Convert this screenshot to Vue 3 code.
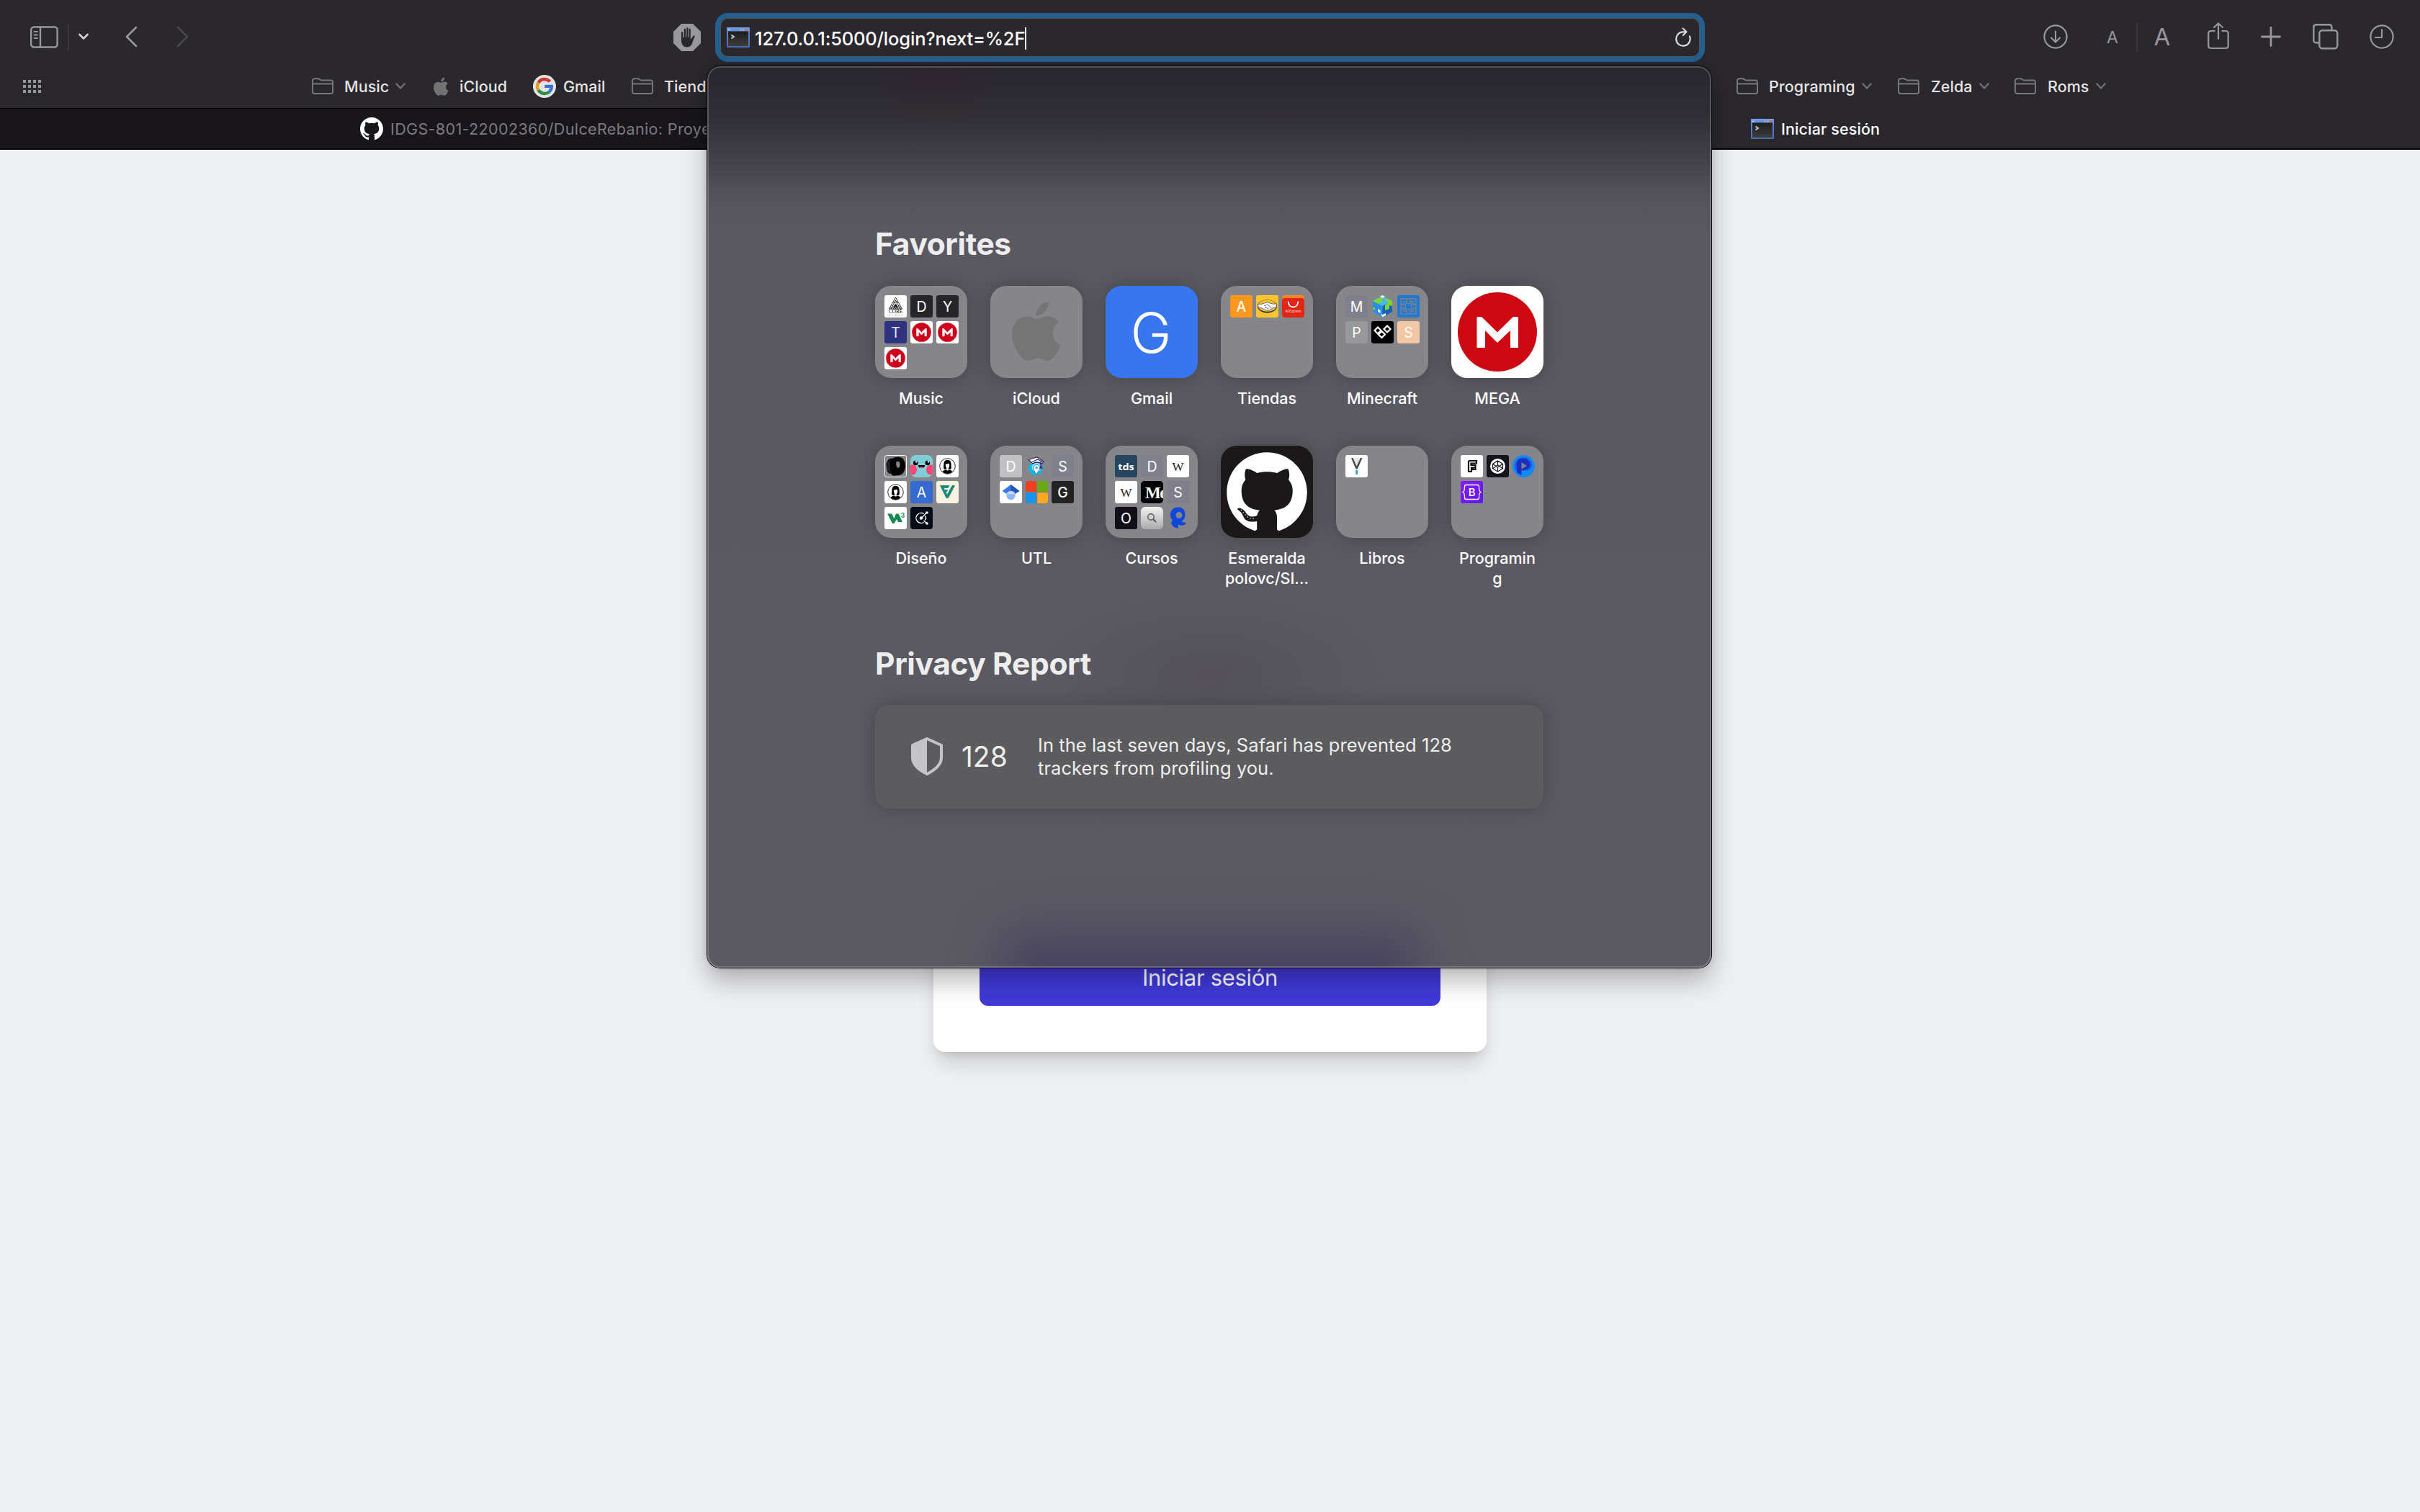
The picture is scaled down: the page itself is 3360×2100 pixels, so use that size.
<script setup>
const apple =
  'M12.152 6.896c-.948 0-2.415-1.078-3.96-1.04-2.04.027-3.91 1.183-4.961 3.014-2.117 3.675-.546 9.103 1.519 12.09 1.013 1.454 2.208 3.09 3.792 3.039 1.52-.065 2.09-.987 3.935-.987 1.831 0 2.35.987 3.96.948 1.637-.026 2.676-1.48 3.676-2.948 1.156-1.688 1.636-3.325 1.662-3.415-.039-.013-3.182-1.221-3.22-4.857-.026-3.04 2.48-4.494 2.597-4.559-1.429-2.09-3.623-2.324-4.39-2.376-2-.156-3.675 1.09-4.61 1.09zM15.53 3.83c.843-1.012 1.4-2.427 1.245-3.83-1.207.052-2.662.805-3.532 1.818-.78.896-1.454 2.338-1.273 3.714 1.338.104 2.715-.688 3.559-1.701'
const github =
  'M8 0C3.58 0 0 3.58 0 8c0 3.54 2.29 6.53 5.47 7.59.4.07.55-.17.55-.38 0-.19-.01-.82-.01-1.49-2.01.37-2.53-.49-2.69-.94-.09-.23-.48-.94-.82-1.13-.28-.15-.68-.52-.01-.53.63-.01 1.08.58 1.23.82.72 1.21 1.87.87 2.33.66.07-.52.28-.87.51-1.07-1.78-.2-3.64-.89-3.64-3.95 0-.87.31-1.59.82-2.15-.08-.2-.36-1.02.08-2.12 0 0 .67-.21 2.2.82.64-.18 1.32-.27 2-.27.68 0 1.36.09 2 .27 1.53-1.04 2.2-.82 2.2-.82.44 1.1.16 1.92.08 2.12.51.56.82 1.27.82 2.15 0 3.07-1.87 3.75-3.65 3.95.29.25.54.73.54 1.48 0 1.07-.01 1.93-.01 2.2 0 .21.15.46.55.38A8.013 8.013 0 0016 8c0-4.42-3.58-8-8-8z'

const folderIcon =
  '<g fill="none" stroke="#77767b" stroke-width="2"><path d="M1 5V4Q1 1.200 4 1.200H8.500Q10 1.200 11 2.300T13.500 3.500H26Q29 3.500 29 6.500V19.500Q29 22 26 22H4Q1 22 1 19V5"/><path d="M1 8.400H29"/></g>'
const googleIcon =
  '<circle cx="16" cy="16" r="16" fill="#e3e3e3"/><g fill="none" stroke-width="4.400"><path d="M23.600 9.400A10 10 0 0 0 7.500 10.800" stroke="#c8372d"/><path d="M7.500 10.800A10 10 0 0 0 7.500 21.200" stroke="#dd9f25"/><path d="M7.500 21.200A10 10 0 0 0 22.500 23.600" stroke="#2f8a43"/><path d="M22.500 23.600A10 10 0 0 0 25.800 16" stroke="#3b70d4"/></g><path d="M16.300 13.800H27.800V18H16.300Z" fill="#3b70d4"/>'

const leftMarks = [
  { name: 'Music', icon: folderIcon, iw: 30, ih: 24, slot: 45, pitch: 169, menu: true },
  { name: 'iCloud', icon: `<path transform="translate(-2.300 .5) scale(1.050)" d="${apple}" fill="#737273"/>`, iw: 21, ih: 26, slot: 36, pitch: 138 },
  { name: 'Gmail', icon: googleIcon, iw: 32, ih: 32, slot: 42, pitch: 137 },
  { name: 'Tiendas', icon: folderIcon, iw: 30, ih: 24, slot: 45, pitch: 170, menu: true },
]
const rightMarks = [
  { name: 'Programing', icon: folderIcon, iw: 30, ih: 24, slot: 45, pitch: 224, menu: true },
  { name: 'Zelda', icon: folderIcon, iw: 30, ih: 24, slot: 46, pitch: 162, menu: true },
  { name: 'Roms', icon: folderIcon, iw: 30, ih: 24, slot: 46, pitch: 150, menu: true },
]

const box = (fill, r = 3) => `<rect width="31" height="31" rx="${r}" fill="${fill}"/>`
const letter = (ch, fill, color = '#fff', weight = 400) =>
  `${box(fill)}<text x="15.500" y="23" text-anchor="middle" font-family="Inter, sans-serif" font-size="19.500" font-weight="${weight}" fill="${color}">${ch}</text>`
const megaMark = 'M36 43.500H42L64 65L86 43.500H92.500V85.500H82.500V61L64 78.500L46.500 61V85.500H36Z'
const mega = `${box('#fff')}<circle cx="15.500" cy="15.500" r="13.300" fill="#d0021b"/><g transform="scale(.242)"><path d="${megaMark}" fill="#fff" stroke="#fff" stroke-width="3" stroke-linejoin="round"/></g>`
const person = `${box('#fff')}<circle cx="15.500" cy="15.500" r="10.800" fill="none" stroke="#111" stroke-width=".9"/><path d="M15.500 6.800C11.500 6.800 10.300 10 10.300 13.500C10.300 17 9.600 19 11.500 20H19.500C21.400 19 20.700 17 20.700 13.500C20.700 10 19.500 6.800 15.500 6.800Z"/><path d="M12.800 12.500Q15.500 12.800 17 11.500Q18.300 12.500 18.300 14.500Q18 17 16.800 18V20.500Q15.500 22 14.200 20.500V18Q12.600 16.500 12.800 12.500Z" fill="#fff"/><path d="M8.500 23Q10 20.500 13.500 20.500Q15.500 22.800 17.500 20.500Q21 20.500 22.500 23Q19.500 26 15.500 26T8.500 23Z"/>`
const wiki = `${box('#fff')}<text x="15.500" y="21.500" text-anchor="middle" font-family="Liberation Serif, serif" font-size="17" textLength="16" lengthAdjust="spacingAndGlyphs" fill="#222">W</text>`

const art = {
  core: `${box('#fff')}<g fill="none" stroke="#222" stroke-width=".9"><path d="M15.500 3L24.500 19H6.500Z"/><path d="M15.500 7L22 19M15.500 7L9 19M12 10H19M10 13.500L15.500 19L21 13.500M8 17H23M13 15.500L15.500 12L18 15.500ZM12.500 19L15.500 15L18.500 19"/></g><circle cx="15.500" cy="14.500" r="1.500"/><text x="15.500" y="25" text-anchor="middle" font-family="Liberation Serif, serif" font-size="7.500" textLength="19" lengthAdjust="spacingAndGlyphs">CORE</text><path d="M6 27.500H25" stroke="#999" stroke-width="1" stroke-dasharray="1.500 3"/>`,
  handshake: `${box('#fcc52d')}<ellipse cx="15.500" cy="15.500" rx="13.500" ry="9.200" fill="#2b3470"/><ellipse cx="15.500" cy="14.800" rx="12.800" ry="8" fill="#fcc52d"/><path d="M2.800 12Q7 13.500 11.500 11Q15.500 9 19 10.800Q24 13.500 28.200 11.500V17Q24 17 22 18.500Q19 21.500 15.500 21Q11 20.500 9 18.500Q6 16.500 2.800 17Z" fill="#fff" stroke="#2b3470" stroke-width=".7"/><path d="M11.500 14.500Q14 14.500 15.500 12.500L21.500 18M12 17.500L14 16.500L15.500 18.500L17.500 18" fill="none" stroke="#2b3470" stroke-width=".8"/>`,
  ali: `${box('#fd8322', 4)}<path d="M0 8Q0 4 4 4H27Q31 4 31 8V27Q31 31 27 31H4Q0 31 0 27Z" fill="#e12516"/><path d="M8.800 9.500Q9.500 16.500 15.500 16.500T22.200 9.500" fill="none" stroke="#fff" stroke-width="1.800" stroke-linecap="round"/><text x="15.500" y="24" text-anchor="middle" font-family="Inter, sans-serif" font-size="5" textLength="22" lengthAdjust="spacingAndGlyphs" fill="#ffd8d0">AliExpress</text>`,
  cube: `<path d="M15.500 1L29 8V23L15.500 30.500L2 23V8Z" fill="#2a8ee8"/><path d="M15.500 15V30.500L29 23V8Z" fill="#1a62b5"/><path d="M15.500 1L29 8L15.500 15L2 8Z" fill="#45b5fa"/><path d="M8 5L15.500 1L17 4L13 6.500L16 9L10 12L2 8ZM20 4L29 8V15L25 14V19L19 21V14L24 10L19 7ZM2 17L5 17V21L2 19Z" fill="#7fd52b"/><path d="M12 1.500L15.500 0L19 2L15.500 4ZM9 19L12.500 21V25L9 23ZM13 26L15.500 27L20 25V28L15.500 30.500Z" fill="#f2f8ff"/>`,
  forge: `${box('#2577d0')}<g fill="none" stroke="#768391" stroke-width="1.300"><rect x="5" y="5" width="21" height="21"/><rect x="11.500" y="11.500" width="8" height="8"/><path d="M13 5V9H9V13H5M18 5V9H22V13H26M13 26V22H9V18H5M18 26V22H22V18H26"/></g><rect x="12" y="12" width="7" height="7" fill="#2577d0"/>`,
  curse: `${box('#000')}<g fill="none" stroke="#fff" stroke-width="2.200"><path d="M9 8.500L4.500 13L9 17.500L13.500 13ZM14.500 14L9.800 18.500L14.500 23L19 18.500ZM22 6.500L17.500 11L22 15.500L26.500 11Z"/></g>`,
  blob: `<rect x=".5" y=".5" width="30" height="30" rx="3" fill="#858488" stroke="#fff"/><path d="M10 5Q19 .5 26 5Q31 13 27.500 22Q25 29 15 28.500Q9 29.500 10 26Q4 26 3.500 20Q1 10 6 6Q8 4 10 5Z"/><path d="M17 9Q22 8 21.500 14Q21 19 17.500 17.500Q15 12 17 9Z" fill="#858488"/><path d="M8 6Q4 14 8.500 25M5 9V22" stroke="#858488" stroke-width=".5" fill="none"/>`,
  kawaii: `<clipPath id="kw"><rect width="31" height="31" rx="8"/></clipPath><g clip-path="url(#kw)"><rect width="31" height="31" fill="#7fcdd7"/><ellipse cx="3" cy="20.500" rx="6" ry="7" fill="#ff4477"/><ellipse cx="28" cy="20.500" rx="6" ry="7" fill="#ff4477"/><circle cx="7.200" cy="11" r="3.300"/><circle cx="23.800" cy="11" r="3.300"/><circle cx="8.200" cy="9.500" r="1.300" fill="#fff"/><circle cx="25" cy="9.500" r="1.300" fill="#fff"/><path d="M10.800 14H20.200Q20 18 15.500 18T10.800 14Z"/><path d="M12.500 17Q15.500 15.500 18.500 17Q17 18.200 15.500 18.200T12.500 17Z" fill="#ff4477"/></g>`,
  person,
  flutter: `${box('#f8f2e0')}<path d="M5.500 6.500H18L16 9.500H10L11.500 12.500H15.500L14 15.500H13L15 19.500L22 6.500H25.500L16.500 23.500H14Z" fill="#1b877a" stroke="#1b877a" stroke-width=".8" stroke-linejoin="round"/>`,
  w3: `${box('#fff')}<path d="M4 9.500H10L13.500 16L16 9.500H19.500L25 21H19L17 17L13.500 23H11Z" fill="#128a50"/><text x="22.500" y="14.500" font-family="Inter, sans-serif" font-size="9" font-weight="600" fill="#128a50">3</text>`,
  graph: `${box('#030c17', 4)}<g fill="none" stroke="#fff" stroke-width="1.400"><path d="M18.600 9.500A7 7 0 1 0 18.600 21.500"/><path d="M20.800 12.500A7 7 0 0 1 20.800 18.500M15.500 15.500L22.500 8M18.500 19L22.500 23"/></g><circle cx="15" cy="15.500" r="2.200" fill="#fff"/><circle cx="23" cy="8" r="1.800" fill="#fff"/><circle cx="23" cy="23" r="1.800" fill="#fff"/>`,
  cap: `<circle cx="14" cy="18" r="10" fill="#16b5e6"/><circle cx="15" cy="17" r="6.500" fill="#7ce4f8"/><path d="M15 27Q10.500 20 11 17.500A4 4 0 0 1 19.500 17.500Q19.500 20 15 27Z" fill="#fff" stroke="#2857a8" stroke-width=".7"/><circle cx="15.200" cy="17.500" r="1.800" fill="#16b5e6"/><path d="M4 6.500L16 3L25 9L23 12Q15 8 10 12Z" fill="#fff" stroke="#3b2c61" stroke-width="1.300"/><path d="M9 9.500L17 6L23.500 10M21 9V16" fill="none" stroke="#3b2c61" stroke-width="1.300"/><path d="M20.500 15H22.500L23.500 19H19.500Z" fill="#593069"/>`,
  scholar: `${box('#fff')}<path d="M15.500 5L27.500 14L21 18Q15.500 13 10 18L3.500 14Z" fill="#3b76e8"/><path d="M15.500 5L27.500 14L21 18L15.500 14Z" fill="#2455af"/><circle cx="15.500" cy="20" r="6.200" fill="#8cb4fb"/><path d="M9.500 18.500A6.300 6.300 0 0 1 21.500 18.500Z" fill="#c1d7fc"/>`,
  ms: `<clipPath id="msq"><rect width="31" height="31" rx="4"/></clipPath><g clip-path="url(#msq)"><rect width="31" height="31" fill="#857a74"/><path d="M0 0H15V15H0Z" fill="#f04022"/><path d="M16.300 0H31V15H16.300Z" fill="#6aa814"/><path d="M0 16.300H15V31H0Z" fill="#1795ec"/><path d="M16.300 16.300H31V31H16.300Z" fill="#ffa922"/></g>`,
  tds: `${box('#28455f')}<text x="15.500" y="20.500" text-anchor="middle" font-family="Open Sans, sans-serif" font-weight="700" font-size="13" textLength="22.500" lengthAdjust="spacingAndGlyphs" fill="#fff">tds</text>`,
  wiki,
  medium: `<clipPath id="mdm"><rect width="31" height="31" rx="5"/></clipPath><g clip-path="url(#mdm)"><rect width="31" height="31" fill="#000"/><text x="6" y="24" font-family="Liberation Serif, serif" font-weight="700" font-size="23" letter-spacing="-1.500" fill="#fff">Me</text></g>`,
  search: `<defs><linearGradient id="sg" x2="0" y2="1"><stop stop-color="#f2f2f3"/><stop offset="1" stop-color="#aaa9ab"/></linearGradient></defs><rect width="31" height="31" rx="6" fill="url(#sg)"/><circle cx="14" cy="14" r="4.200" fill="none" stroke="#555" stroke-width="1.400"/><path d="M17.300 17.300L20.500 20.500" stroke="#555" stroke-width="2" stroke-linecap="round"/>`,
  ring: `<path fill-rule="evenodd" d="M16 .5C23 .5 26 6 25.500 12Q25 17.500 20.500 20Q24 21.500 27.500 23Q22 28 16 24.500L15.500 30Q7 28 6 22Q8 20 7.500 18Q5 15 5 11C5 5 9 .5 16 .5ZM17 7A4.500 4.500 0 1 0 17 16A4.500 4.500 0 1 0 17 7Z" fill="#0f48d8"/>`,
  yed: `${box('#fff')}<path d="M9 4L15.500 17L22 4" fill="#e8e8e8"/><path d="M8 4H10.500L15.500 15.500L21 4H23.500L17 19H14.300Z" fill="#4a4a4a"/><path d="M14.200 20.500H17V27H14.200Z" fill="#32a2c7"/>`,
  frame: `${box('#fff')}<path d="M11 8H22V11.500H14.500V14H20.500V20H17V17.500M11 8V23H15V17.500H20" fill="none" stroke="#111" stroke-width="2.200"/>`,
  codepen: `${box('#15141c')}<circle cx="15.500" cy="15.500" r="10.500" fill="#fff"/><g fill="none" stroke="#15141c" stroke-width="1.200" stroke-linejoin="round"><path d="M15.500 8L22.500 12.300V18.700L15.500 23L8.500 18.700V12.300ZM8.500 12.300L15.500 17L22.500 12.300M8.500 18.700L15.500 14L22.500 18.700M15.500 8V14M15.500 17V23"/></g>`,
  swirl: `<circle cx="15.500" cy="15.500" r="15.500" fill="#1489f6"/><path d="M3 15A12.500 12.500 0 0 1 20 4Q28 8 27 16Q23 24 13 21V28Q4 25 3 15Z" fill="#1a58e6"/><path d="M6 12Q6 5 13 5H18Q25 8 24 15Q22 22 12 21V28L6 24Z" fill="#1a2fc0"/><path d="M12.500 10L20 15L12.500 19.500Z" fill="#7d829c"/>`,
  boot: `<defs><linearGradient id="bg" x2="1" y2="1"><stop stop-color="#8a1cf7"/><stop offset="1" stop-color="#5c18ea"/></linearGradient></defs><rect width="31" height="31" rx="3" fill="url(#bg)"/><path d="M7.500 5.500H23.500Q25.500 5.500 25.500 8Q25.500 14.500 28 15.500Q25.500 16.500 25.500 23Q25.500 25.500 23.500 25.500H7.500Q5.500 25.500 5.500 23Q5.500 16.500 3 15.500Q5.500 14.500 5.500 8Q5.500 5.500 7.500 5.500Z" fill="none" stroke="#fff" stroke-width="1.300"/><text x="15.700" y="21" text-anchor="middle" font-family="Inter, sans-serif" font-weight="500" font-size="15" fill="#fff">B</text>`,
}

const muted = '#80808c'
const favorites = [
  { name: 'Music', minis: [art.core, letter('D', '#262628'), letter('Y', '#262628'), letter('T', '#2f3181', '#dfe6ff'), mega, mega, mega] },
  { name: 'iCloud', full: `<path transform="translate(22.500 22.500) scale(3.450 3.400)" d="${apple}" fill="#757575"/>` },
  { name: 'Gmail', color: '#3876ef', full: '<text x="63" y="93" text-anchor="middle" font-family="Inter, sans-serif" font-weight="300" font-size="77" textLength="57" lengthAdjust="spacingAndGlyphs" fill="#fff">G</text>' },
  { name: 'Tiendas', minis: [letter('A', '#ff961e', '#fff', 500), art.handshake, art.ali] },
  { name: 'Minecraft', minis: [letter('M', muted), art.cube, art.forge, letter('P', '#979899'), art.curse, letter('S', '#f3c7a4')] },
  { name: 'MEGA', color: '#fff', full: `<circle cx="64" cy="64" r="55" fill="#cd0812"/><path d="${megaMark}" fill="#fff" stroke="#fff" stroke-width="1" stroke-linejoin="round"/>` },
  { name: 'Diseño', minis: [art.blob, art.kawaii, person, person, letter('A', '#356ad0'), art.flutter, art.w3, art.graph] },
  { name: 'UTL', minis: [letter('D', '#c1c1c2'), art.cap, letter('S', muted), art.scholar, art.ms, letter('G', '#222222', '#fff', 500)] },
  { name: 'Cursos', minis: [art.tds, letter('D', muted), wiki, wiki, art.medium, letter('S', muted), letter('O', '#120f18'), art.search, art.ring] },
  { name: 'Esmeralda polovc/SI...', color: '#1a1819', full: `<path transform="translate(8.300 9.300) scale(6.970)" d="${github}" fill="#fff"/><path d="M28 89Q32 94 36 98T49 101" fill="none" stroke="#fff" stroke-width="1.300" stroke-dasharray="1.300 3"/>` },
  { name: 'Libros', minis: [art.yed] },
  { name: 'Programin g', minis: [art.frame, art.codepen, art.swirl, art.boot] },
]

const consoleIcon =
  '<defs><linearGradient id="cb" x2="0" y2="1"><stop stop-color="#78a3e4"/><stop offset=".18" stop-color="#5e8ad0"/><stop offset="1" stop-color="#4a6cad"/></linearGradient><linearGradient id="cs" x2="0" y2="1"><stop stop-color="#1d1d1d"/><stop offset="1" stop-color="#3c3d3c"/></linearGradient></defs><rect width="32" height="28" rx="1" fill="url(#cb)"/><rect x="2" y="5.500" width="28" height="20.500" fill="url(#cs)"/><path d="M2 3.500H5" stroke="#c5daf8" stroke-width="1.500"/><path d="M18 3.500H25" stroke="#a8a9b8" stroke-width="2" stroke-dasharray="3 1"/><path d="M26 3.500H29" stroke="#e65b5b" stroke-width="2.400"/><path d="M6.500 10.500L10 13L6.500 15.500" fill="none" stroke="#ccc" stroke-width="1.800"/>'
</script>

<template>
  <div class="desktop">
    <header class="chrome">
      <div class="toolbar">
        <svg class="i-sidebar" width="39" height="31" viewBox="0 0 39 31" fill="none" stroke="#98979c" stroke-width="2.400">
          <rect x="1.200" y="1.500" width="36.400" height="28" rx="4" />
          <path d="M14 1.500V29.500" />
          <path d="M5.500 8H10M5.500 12.500H10M5.500 17H10" stroke-width="1.800" stroke-linecap="round" />
        </svg>
        <i class="rule r1"></i>
        <svg class="i-chev" width="14" height="10" viewBox="0 0 14 10" fill="none" stroke="#d0cfd3" stroke-width="2.600" stroke-linecap="round" stroke-linejoin="round"><path d="M1.500 2L7 7.500L12.500 2" /></svg>
        <svg class="i-back" width="17" height="30" viewBox="0 0 17 30" fill="none" stroke="#98979c" stroke-width="2.600" stroke-linecap="round" stroke-linejoin="round"><path d="M15 2L2 15L15 28" /></svg>
        <svg class="i-fwd" width="17" height="30" viewBox="0 0 17 30" fill="none" stroke="#48474c" stroke-width="2.600" stroke-linecap="round" stroke-linejoin="round"><path d="M2 2L15 15L2 28" /></svg>
        <svg class="i-hand" width="38" height="38" viewBox="0 0 38 38">
          <path d="M11 0H27L38 11V27L27 38H11L0 27V11Z" fill="#98979b" />
          <path d="M11 23V12.200Q11 11 12.200 11T13.300 12.200V19H14.800V8Q14.800 6.500 16 6.500T17.200 8V18.500H18.300V6Q18.300 5 19.400 5T20.500 6V18.500H21.600V8Q21.600 6.500 22.700 6.500T23.800 8V22L27 17.500Q28.500 15.800 30 17Q28 21 26.500 26Q24.500 32.500 19 32.500Q11 32.500 11 23Z" fill="#2a282d" />
        </svg>
        <div class="url">
          <svg width="32" height="28" viewBox="0 0 32 28" v-html="consoleIcon"></svg>
          <span class="address">127.0.0.1:5000/login?next=%2F</span><i class="caret"></i>
          <svg class="i-reload" width="24" height="27" viewBox="0 0 24 27" fill="none" stroke="#dcdbdd" stroke-width="2.200" stroke-linecap="round" stroke-linejoin="round">
            <path d="M21 12.500A9.700 9.700 0 1 1 11.500 6.300H16" /><path d="M11.800 1.500L16.500 6.300L11.800 11" />
          </svg>
        </div>
        <svg class="i-dl" width="34" height="34" viewBox="0 0 34 34" fill="none" stroke="#98979c" stroke-width="2.200" stroke-linecap="round" stroke-linejoin="round">
          <circle cx="17" cy="17" r="15.600" /><path d="M17 9.500V24.500M11 18.500L17 24.500L23 18.500" />
        </svg>
        <span class="size small">A</span>
        <i class="rule r2"></i>
        <span class="size big">A</span>
        <svg class="i-share" width="30" height="38" viewBox="0 0 30 38" fill="none" stroke="#98979c" stroke-width="2.200" stroke-linecap="round" stroke-linejoin="round">
          <path d="M9.500 12H5Q1.200 12 1.200 15.500V32.500Q1.200 36 5 36H25Q28.700 36 28.700 32.500V15.500Q28.700 12 25 12H20.500M15 23V2M9 7L15 1.500L21 7" />
        </svg>
        <svg class="i-plus" width="28" height="28" viewBox="0 0 28 28" fill="none" stroke="#98979c" stroke-width="2.800" stroke-linecap="round"><path d="M14 1.500V26.500M1.500 14H26.500" /></svg>
        <svg class="i-tabs" width="36" height="36" viewBox="0 0 36 36" fill="none" stroke="#98979c" stroke-width="2.400">
          <rect x="9.300" y="9.300" width="25" height="25" rx="4" />
          <path d="M8.500 26.500H5.500Q1.300 26.500 1.300 23V5Q1.300 1.300 5.500 1.300H22.500Q26.500 1.300 26.500 5V8" />
        </svg>
        <svg class="i-clock" width="34" height="34" viewBox="0 0 34 34" fill="none" stroke="#98979c" stroke-width="2.200" stroke-linecap="round" stroke-linejoin="round">
          <circle cx="17" cy="17" r="15.600" /><path d="M17 7V18H8" />
        </svg>
      </div>

      <nav class="marks">
        <svg class="i-grid" width="25" height="18" viewBox="0 0 25 18" fill="none" stroke="#98979c" stroke-width="4" stroke-dasharray="4 3"><path d="M0 2H25M0 9H25M0 16H25" /></svg>
        <div v-for="(group, g) in [leftMarks, rightMarks]" :key="g" class="group" :class="{ first: g === 0 }">
          <div v-for="m in group" :key="m.name" class="mark" :style="{ width: m.pitch + 'px' }">
            <span class="slot" :style="{ width: m.slot + 'px' }"><svg :width="m.iw" :height="m.ih" :viewBox="`0 0 ${m.iw} ${m.ih}`" v-html="m.icon"></svg></span>
            <span>{{ m.name }}</span>
            <svg v-if="m.menu" class="drop" width="14" height="10" viewBox="0 0 14 10" fill="none" stroke="#6f6e73" stroke-width="2.400" stroke-linecap="round" stroke-linejoin="round"><path d="M1.500 1.500L7 7.500L12.500 1.500" /></svg>
          </div>
        </div>
      </nav>

      <div class="tabs">
        <div class="tab idle">
          <svg width="32" height="32" viewBox="0 0 16 16"><path :d="github" fill="#fff" /></svg>
          <span>IDGS-801-22002360/DulceRebanio: Proyecto</span>
        </div>
        <div class="tab active">
          <svg width="32" height="28" viewBox="0 0 32 28" v-html="consoleIcon"></svg>
          <span>Iniciar sesión</span>
        </div>
      </div>
    </header>

    <main class="page">
      <div class="login"><div class="submit">Iniciar sesión</div></div>
    </main>

    <section class="panel">
      <h2>Favorites</h2>
      <div class="favorites">
        <div v-for="f in favorites" :key="f.name" class="favorite">
          <div class="tile" :style="{ background: f.color }">
            <svg v-if="f.full" width="128" height="128" viewBox="0 0 128 128" v-html="f.full"></svg>
            <div v-else class="minis">
              <svg v-for="(m, i) in f.minis" :key="i" width="31" height="31" viewBox="0 0 31 31" v-html="m"></svg>
            </div>
          </div>
          <p>{{ f.name }}</p>
        </div>
      </div>
      <h2 class="second">Privacy Report</h2>
      <div class="report">
        <svg width="46" height="54" viewBox="0 0 46 54">
          <path d="M23 2L43 11V28Q43 41 23 51Q3 41 3 28V11Z" fill="none" stroke="#c5c4c8" stroke-width="4" stroke-linejoin="round" />
          <path d="M23 2V51Q3 41 3 28V11Z" fill="#c5c4c8" />
        </svg>
        <strong>128</strong>
        <p>In the last seven days, Safari has prevented 128<br />trackers from profiling you.</p>
      </div>
    </section>
  </div>
</template>

<style>
body {
  margin: 0;
  background: #eff0f4;
}
</style>

<style scoped>
.desktop {
  position: relative;
  width: 3360px;
  height: 2100px;
  overflow: hidden;
  background: #eff0f4;
  font-family: Inter, "Liberation Sans", sans-serif;
}
svg {
  display: block;
  flex: none;
}
.chrome {
  height: 208px;
  background: #2a282d;
}
.toolbar {
  display: flex;
  align-items: center;
  height: 102px;
}
.toolbar > * {
  flex: none;
}
.i-sidebar { margin-left: 42px; }
.rule { width: 2px; background: #38363b; }
.r1 { height: 36px; margin: 2px 0 0 13px; }
.r2 { height: 40px; margin: 2px 22px 0 24px; }
.i-chev { margin-left: 13px; }
.i-back { margin-left: 51px; }
.i-fwd { margin-left: 54px; }
.i-hand { margin: 2px 0 0 673px; }
.url {
  display: flex;
  align-items: center;
  box-sizing: border-box;
  width: 1374px;
  height: 68px;
  margin: 2px 0 0 20px;
  padding-left: 9px;
  border: 7px solid #23608f;
  border-radius: 18px;
  box-shadow: inset 0 0 0 1px #55545a;
  color: #fff;
}
.address {
  margin: 3px 0 0 7px;
  font-size: 25.500px;
  font-weight: 500;
  line-height: 32px;
  letter-spacing: -0.190px;
}
.caret {
  width: 2px;
  height: 31px;
  margin-top: 2px;
  background: #fff;
}
.i-reload { margin: -2px 11px 0 auto; }
.i-dl { margin-left: 470px; }
.size { color: #98979c; font-weight: 400; text-align: center; }
.small { width: 18px; margin: 1px 0 0 53px; font-size: 23px; }
.big { width: 24px; font-size: 33px; }
.i-share { margin: -3px 0 0 51px; }
.i-plus { margin-left: 44px; }
.i-tabs { margin-left: 44px; }
.i-clock { margin-left: 43px; }

.marks {
  display: flex;
  align-items: center;
  height: 36px;
  padding-left: 32px;
  font-size: 21.500px;
  font-weight: 500;
  color: #e4e3e5;
}
.i-grid { margin-right: 376px; }
.group { display: flex; flex: none; margin-top: -1px; }
.group.first { width: 1978px; }
.mark { display: flex; align-items: center; flex: none; white-space: nowrap; letter-spacing: 0.050px; }
.slot { flex: none; }
.drop { margin-left: 9px; }

.tabs {
  display: flex;
  height: 56px;
  margin-top: 12px;
  border-bottom: 2px solid #000;
  font-size: 21.500px;
}
.tab {
  display: flex;
  align-items: center;
  gap: 10px;
  box-sizing: border-box;
  width: 1680px;
  white-space: nowrap;
}
.idle { padding-left: 500px; border-top: 1px solid #000; background: #18161a; color: #7c7b80; letter-spacing: 0.370px; }
.active { padding: 1px 0 0 751px; color: #fff; font-weight: 500; letter-spacing: 0.120px; }

.page {
  display: flex;
  justify-content: center;
  padding-top: 500px;
}
.login {
  display: flex;
  align-items: flex-end;
  box-sizing: border-box;
  width: 768px;
  height: 753px;
  padding: 64px;
  border-radius: 16px;
  background: #fff;
  box-shadow: 0 20px 30px -6px rgba(0, 0, 0, 0.16), 0 8px 12px -6px rgba(0, 0, 0, 0.12);
}
.submit {
  width: 640px;
  height: 78px;
  border-radius: 12px;
  background: #403ad9;
  color: #fff;
  font-size: 31px;
  line-height: 78px;
  letter-spacing: -0.300px;
  text-align: center;
}

.panel {
  position: absolute;
  left: 982px;
  top: 92px;
  box-sizing: border-box;
  width: 1394px;
  height: 1252px;
  padding: 201px 233px 0;
  overflow: hidden;
  border-radius: 18px;
  background:
    radial-gradient(ellipse 90px 60px at 318px 18px, rgba(62, 28, 40, 0.22), transparent),
    radial-gradient(ellipse 240px 110px at 700px 845px, rgba(74, 68, 78, 0.4), transparent),
    linear-gradient(#29262f 0, #302e34 66px, #424047 125px, #55535a 178px, #5a5962 235px, #5b5962 100%);
  box-shadow:
    0 0 0 1px #0b0a0d,
    0 18px 36px rgba(0, 0, 0, 0.28),
    0 0 12px rgba(0, 0, 0, 0.12);
}
/* colour of the button below bleeding through the translucent panel */
.panel::before {
  content: "";
  position: absolute;
  left: 410px;
  top: 1205px;
  width: 576px;
  height: 130px;
  border-radius: 30px;
  background: #474360;
  filter: blur(32px);
}
.panel::after {
  content: "";
  position: absolute;
  inset: 0;
  border-radius: 18px;
  box-shadow: inset 0 0 0 2px rgba(255, 255, 255, 0.2);
}
h2 {
  margin: 0;
  color: #ededee;
  font-size: 42.500px;
  font-weight: 700;
  line-height: 92px;
  letter-spacing: -0.400px;
}
.favorites {
  display: grid;
  grid-template-columns: repeat(6, 128px);
  gap: 0 32px;
  grid-auto-rows: 222px;
  margin-top: 12px;
}
.tile {
  width: 128px;
  height: 128px;
  border-radius: 22px;
  background: #868589;
  box-shadow: 0 0 26px rgba(20, 20, 10, 0.28);
}
.minis {
  display: grid;
  grid-template-columns: repeat(3, 31px);
  gap: 5px;
  padding: 13px;
}
.favorite p {
  width: 116px;
  margin: 14px auto 0;
  color: #fff;
  font-size: 21.500px;
  font-weight: 500;
  line-height: 28px;
  text-align: center;
}
.second { margin-top: 35px; }
.report {
  display: flex;
  align-items: center;
  box-sizing: border-box;
  width: 928px;
  height: 144px;
  margin-top: 11px;
  padding-left: 49px;
  border-radius: 20px;
  background: #5c5c5e;
  box-shadow: 0 0 24px rgba(20, 20, 10, 0.24);
  color: #eeeeef;
}
.report strong {
  width: 80px;
  margin: -2px 0 0 25px;
  font-size: 39px;
  font-weight: 400;
}
.report p {
  margin: 0 0 0 26px;
  font-size: 25.500px;
  line-height: 32px;
  letter-spacing: 0.050px;
  white-space: nowrap;
}
</style>
